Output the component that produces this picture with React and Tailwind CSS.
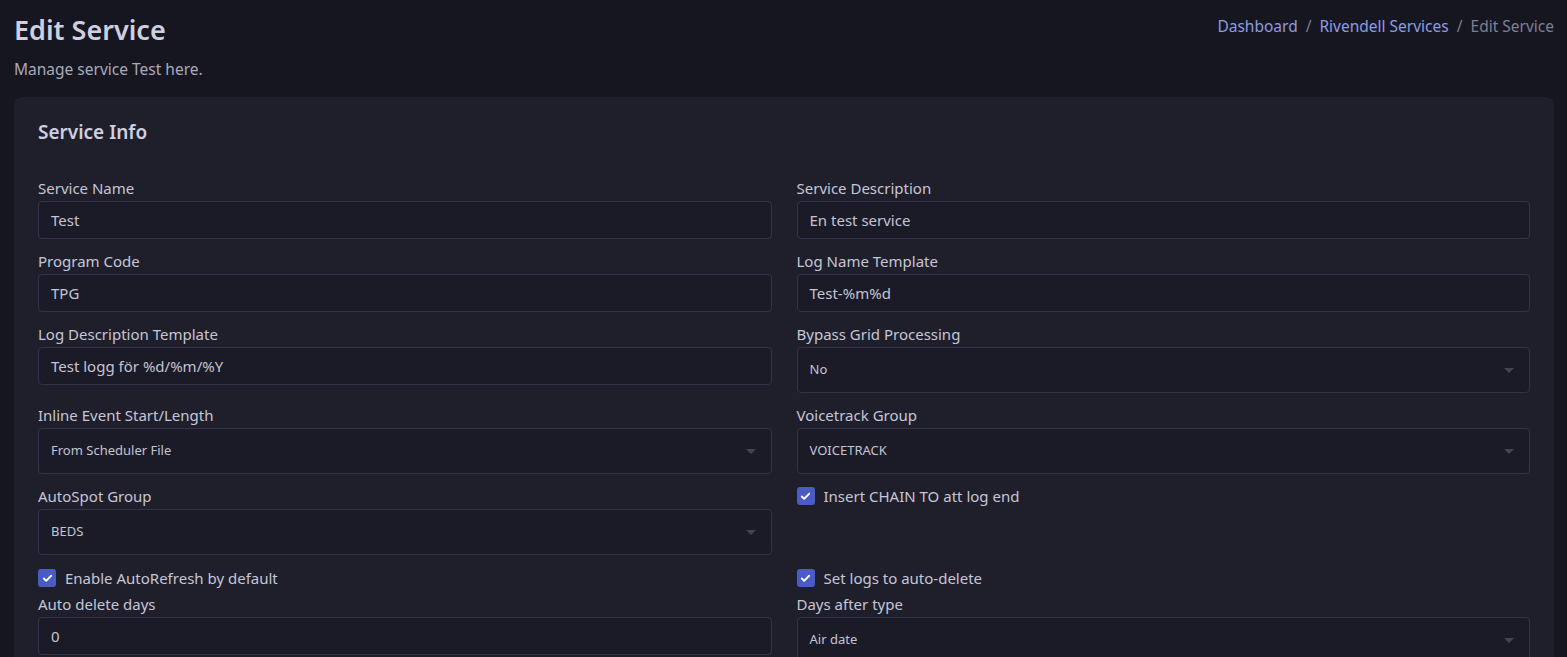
import { Check } from 'lucide-react'

function cn(...classes) {
  return classes.filter(Boolean).join(' ')
}

function Label({ children }) {
  return <div className="text-[15px] leading-[22px] text-[#c6c6d6] mb-[2px]">{children}</div>
}

function TextField({ label, value }) {
  return (
    <div className="mb-[11px]">
      <Label>{label}</Label>
      <div className="h-[38px] flex items-center px-[12px] rounded-[4px] border border-[#34314d] bg-[#1b1b27] text-[15px] text-[#c4c4d2]">
        {value}
      </div>
    </div>
  )
}

function SelectField({ label, value }) {
  return (
    <div className="mb-[11px]">
      <Label>{label}</Label>
      <div className="h-[46px] flex items-center justify-between pl-[12px] pr-[15px] rounded-[4px] border border-[#34314d] bg-[#1b1b27] text-[13px] text-[#c4c4d2]">
        <span>{value}</span>
        <span className="w-0 h-0 border-l-[5px] border-r-[5px] border-t-[5px] border-l-transparent border-r-transparent border-t-[#44444c]" />
      </div>
    </div>
  )
}

function CheckRow({ label, className }) {
  return (
    <div className={cn('flex items-center h-[22px] gap-[9px]', className)}>
      <span className="w-[18px] h-[18px] rounded-[3px] bg-[#4a5cc4] flex items-center justify-center">
        <Check size={11} strokeWidth={4} className="text-white" />
      </span>
      <span className="text-[15px] text-[#c6c6d6]">{label}</span>
    </div>
  )
}

export default function App() {
  return (
    <div
      className="min-h-[657px] bg-[#161621] px-[13px] pt-[14px] text-[#c6c6d6]"
      style={{ fontFamily: '"Noto Sans", "Open Sans", sans-serif' }}
    >
      <div className="flex justify-between items-start">
        <div className="pl-[1px]">
          <h1 className="text-[27px] leading-[32px] font-semibold text-[#cfcfe0]">Edit Service</h1>
          <p className="mt-[13px] text-[15.5px] leading-[20px] text-[#a9a9b9]">Manage service Test here.</p>
        </div>
        <div className="flex items-center gap-[8px] text-[15.5px] mt-[1px]">
          <span className="text-[#8d9be0]">Dashboard</span>
          <span className="text-[#7c7c8c]">/</span>
          <span className="text-[#8d9be0]">Rivendell Services</span>
          <span className="text-[#7c7c8c]">/</span>
          <span className="text-[#7f7f8f]">Edit Service</span>
        </div>
      </div>

      <div className="mt-[18px] ml-[1px] rounded-[8px] bg-[#1f1f2c] px-[24px] pt-[21px] pb-[20px]">
        <h2 className="text-[19px] leading-[28px] font-semibold text-[#cfcfe0]">Service Info</h2>

        <div className="mt-[31px] grid grid-cols-2 gap-x-[25px] items-start">
          <TextField label="Service Name" value="Test" />
          <TextField label="Service Description" value="En test service" />

          <TextField label="Program Code" value="TPG" />
          <TextField label="Log Name Template" value="Test-%m%d" />

          <TextField label="Log Description Template" value="Test logg för %d/%m/%Y" />
          <SelectField label="Bypass Grid Processing" value="No" />

          <SelectField label="Inline Event Start/Length" value="From Scheduler File" />
          <SelectField label="Voicetrack Group" value="VOICETRACK" />

          <SelectField label="AutoSpot Group" value="BEDS" />
          <CheckRow label="Insert CHAIN TO att log end" />

          <div className="mt-[1px]">
            <CheckRow label="Enable AutoRefresh by default" />
            <div className="mt-[4px]">
              <TextField label="Auto delete days" value="0" />
            </div>
          </div>
          <div className="mt-[1px]">
            <CheckRow label="Set logs to auto-delete" />
            <div className="mt-[4px]">
              <SelectField label="Days after type" value="Air date" />
            </div>
          </div>
        </div>
      </div>
    </div>
  )
}
